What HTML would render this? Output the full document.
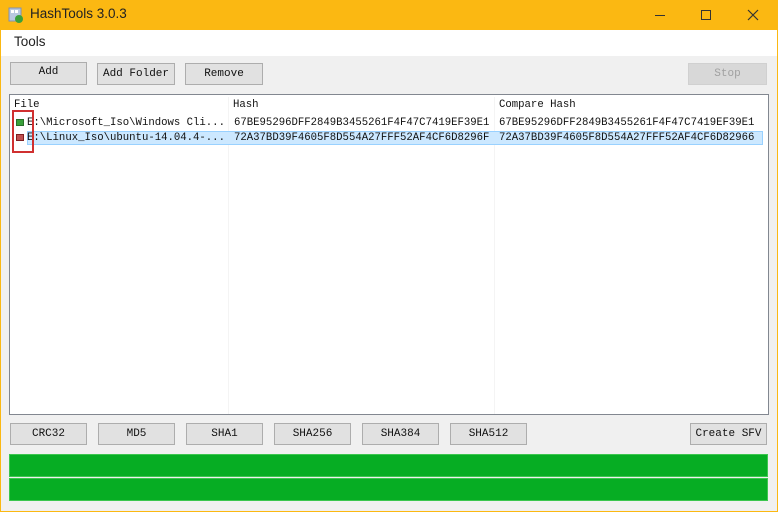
<!DOCTYPE html>
<html><head><style>
*{margin:0;padding:0;box-sizing:border-box}
body{width:778px;height:512px;overflow:hidden;background:#f0f0f0;position:relative;font-family:"Liberation Mono",monospace;font-size:10.65px;color:#111}
.a{position:absolute}
#tb{left:0;top:0;width:778px;height:30px;background:#fbb812}
#tb .t{left:30px;top:6px;font-family:"Liberation Sans",sans-serif;font-size:13.5px;color:#222}
#menu{left:1px;top:30px;width:776px;height:26px;background:#fff}
.btn{position:absolute;background:#e1e1e1;border:1px solid #adadad;text-align:center;line-height:20px;font-size:11px;color:#111}
#list{left:9px;top:94px;width:760px;height:321px;background:#fff;border:1px solid #828790}
.hd{top:4px}
.sep{top:2px;width:1px;height:317px;background:#f4f4f4}
.row{white-space:pre;height:14px;line-height:14px}
.bar{left:9px;width:759px;height:23px;background:#06ad23;border:1px solid #3cc64f}
</style></head><body>
<div class="a" style="left:0;top:0;width:1px;height:512px;background:#fbb812"></div>
<div class="a" style="right:0;top:0;width:1px;height:512px;background:#fbb812"></div>
<div class="a" style="left:0;bottom:0;width:778px;height:1px;background:#fbb812"></div>
<div id="tb" class="a">
 <svg class="a" style="left:8px;top:7px" width="16" height="16"><rect x="1" y="1" width="12" height="13" fill="#b8c8e0" stroke="#8090b0"/><rect x="3" y="3" width="3" height="3" fill="#fff"/><rect x="7" y="3" width="3" height="3" fill="#fff"/><circle cx="11" cy="12" r="4" fill="#3aa03a"/></svg>
 <div class="a t">HashTools 3.0.3</div>
 <div class="a" style="left:655px;top:15px;width:10px;height:1px;background:#333"></div>
 <div class="a" style="left:701px;top:10px;width:10px;height:10px;border:1px solid #333"></div>
 <svg class="a" style="left:747px;top:9px" width="12" height="12"><path d="M1 1L11 11M11 1L1 11" stroke="#333" stroke-width="1.2"/></svg>
</div>
<div id="menu" class="a"><div class="a" style="left:13px;top:4px;font-family:'Liberation Sans',sans-serif;font-size:13.5px;color:#222">Tools</div></div>
<div class="btn" style="left:10px;top:62px;width:77px;height:23px;line-height:18px">Add</div>
<div class="btn" style="left:97px;top:63px;width:78px;height:22px">Add Folder</div>
<div class="btn" style="left:185px;top:63px;width:78px;height:22px">Remove</div>
<div class="btn" style="left:688px;top:63px;width:79px;height:22px;color:#a0a0a0;background:#d8d8d8;border-color:#d0d0d0">Stop</div>
<div id="list" class="a">
 <div class="a sep" style="left:218px"></div>
 <div class="a sep" style="left:484px"></div>
 <div class="a hd" style="left:4px">File</div>
 <div class="a hd" style="left:223px">Hash</div>
 <div class="a hd" style="left:489px">Compare Hash</div>
 <div class="a" style="left:17px;top:36px;width:736px;height:14px;background:#cce8ff;border:1px solid #99d1ff"></div>
 <div class="a row" style="left:17px;top:21px">E:\Microsoft_Iso\Windows Cli...</div>
 <div class="a row" style="left:224px;top:21px">67BE95296DFF2849B3455261F4F47C7419EF39E1</div>
 <div class="a row" style="left:489px;top:21px">67BE95296DFF2849B3455261F4F47C7419EF39E1</div>
 <div class="a row" style="left:17px;top:36px">E:\Linux_Iso\ubuntu-14.04.4-...</div>
 <div class="a row" style="left:224px;top:36px">72A37BD39F4605F8D554A27FFF52AF4CF6D8296F</div>
 <div class="a row" style="left:489px;top:36px">72A37BD39F4605F8D554A27FFF52AF4CF6D82966</div>
 <div class="a" style="left:6px;top:24px;width:8px;height:7px;background:#3aa03a;border:1px solid #2a702a"></div>
 <div class="a" style="left:6px;top:39px;width:8px;height:7px;background:#c05050;border:1px solid #802020"></div>
 <div class="a" style="left:2px;top:15px;width:22px;height:43px;border:2px solid #d03030"></div>
</div>
<div class="btn" style="left:10px;top:423px;width:77px;height:22px">CRC32</div>
<div class="btn" style="left:98px;top:423px;width:77px;height:22px">MD5</div>
<div class="btn" style="left:186px;top:423px;width:77px;height:22px">SHA1</div>
<div class="btn" style="left:274px;top:423px;width:77px;height:22px">SHA256</div>
<div class="btn" style="left:362px;top:423px;width:77px;height:22px">SHA384</div>
<div class="btn" style="left:450px;top:423px;width:77px;height:22px">SHA512</div>
<div class="btn" style="left:690px;top:423px;width:77px;height:22px">Create SFV</div>
<div class="a bar" style="top:454px"></div>
<div class="a bar" style="top:478px"></div>
</body></html>
